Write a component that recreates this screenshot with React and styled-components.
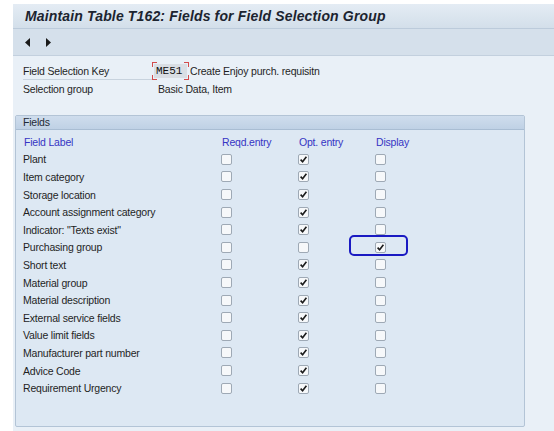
import styled, { createGlobalStyle } from 'styled-components';

const GlobalStyle = createGlobalStyle`
  html, body {
    margin: 0;
    padding: 0;
    background: #ffffff;
  }
  body {
    font-family: "Liberation Sans", Arial, sans-serif;
    font-size: 10.5px;
    letter-spacing: -0.2px;
    color: #1f1f1f;
  }
`;

const fields = [
  { label: 'Plant', opt: true },
  { label: 'Item category', opt: true },
  { label: 'Storage location', opt: true },
  { label: 'Account assignment category', opt: true },
  { label: 'Indicator: "Texts exist"', opt: true },
  { label: 'Purchasing group', display: true, focus: true },
  { label: 'Short text', opt: true },
  { label: 'Material group', opt: true },
  { label: 'Material description', opt: true },
  { label: 'External service fields', opt: true },
  { label: 'Value limit fields', opt: true },
  { label: 'Manufacturer part number', opt: true },
  { label: 'Advice Code', opt: true },
  { label: 'Requirement Urgency', opt: true },
];

const Check = ({ checked }) => (
  <Box>
    {checked && (
      <svg width="9" height="9" viewBox="0 0 9 9">
        <path d="M1.6 4.6 L3.6 6.8 L7.4 1.8" fill="none" stroke="#1b1b1b" strokeWidth="1.6" />
      </svg>
    )}
  </Box>
);

const App = () => {
  return (
    <>
      <GlobalStyle />
      <Screen>
        <TitleBar>
          <Title>Maintain Table T162: Fields for Field Selection Group</Title>
        </TitleBar>
        <Toolbar>
          <Arrow>
            <svg width="6" height="9" viewBox="0 0 6 9">
              <path d="M5 0 L0 4.5 L5 9 Z" fill="#1a1a1a" />
            </svg>
          </Arrow>
          <Arrow>
            <svg width="6" height="9" viewBox="0 0 6 9">
              <path d="M1 0 L6 4.5 L1 9 Z" fill="#1a1a1a" />
            </svg>
          </Arrow>
        </Toolbar>
        <KeyArea>
          <KeyRow>
            <KeyLabel underline>Field Selection Key</KeyLabel>
            <InputField>
              ME51
              <Corner pos="tl" />
              <Corner pos="tr" />
              <Corner pos="bl" />
              <Corner pos="br" />
            </InputField>
            <KeyText>Create Enjoy purch. requisitn</KeyText>
          </KeyRow>
          <KeyRow>
            <KeyLabel>Selection group</KeyLabel>
            <KeyText indent>Basic Data, Item</KeyText>
          </KeyRow>
        </KeyArea>
        <Group>
          <GroupHeader>Fields</GroupHeader>
          <Table>
            <HeadCell>Field Label</HeadCell>
            <HeadCell>Reqd.entry</HeadCell>
            <HeadCell>Opt. entry</HeadCell>
            <HeadCell>Display</HeadCell>
            {fields.map(f => (
              <Row key={f.label}>
                <Cell>{f.label}</Cell>
                <Cell><Check checked={!!f.reqd} /></Cell>
                <Cell><Check checked={!!f.opt} /></Cell>
                <Cell>
                  <Check checked={!!f.display} />
                  {f.focus && <Marker />}
                </Cell>
              </Row>
            ))}
          </Table>
        </Group>
      </Screen>
    </>
  );
};

export default App;

const Screen = styled.div`
  margin: 4px 0 0 13px;
  height: 427px;
  background: #e9f0f7;
  display: flex;
  flex-direction: column;
`;

const TitleBar = styled.div`
  height: 24px;
  display: flex;
  align-items: center;
  padding-left: 12px;
  background: linear-gradient(#e4ecf4, #d3dfea);
  border-bottom: 1px solid #bccbdb;
`;

const Title = styled.h1`
  margin: 0;
  font-family: "Liberation Sans", Arial, sans-serif;
  font-weight: bold;
  font-style: italic;
  font-size: 14px;
  letter-spacing: 0.15px;
  color: #1c2430;
`;

const Toolbar = styled.div`
  height: 26px;
  display: flex;
  align-items: center;
  gap: 14px;
  padding-left: 12px;
  background: #d5e0eb;
  border-bottom: 1px solid #c3d0de;
`;

const Arrow = styled.span`
  display: flex;
  width: 6px;
`;

const KeyArea = styled.div`
  padding: 6px 0 0 10px;
  height: 53px;
`;

const KeyRow = styled.div`
  display: flex;
  align-items: center;
  height: 18px;
`;

const KeyLabel = styled.div`
  width: 131px;
  height: 16px;
  line-height: 16px;
  border-bottom: ${p => (p.underline ? '1px solid #c8d3de' : '1px solid transparent')};
`;

const InputField = styled.div`
  position: relative;
  width: 31px;
  height: 14px;
  line-height: 14px;
  padding-left: 2px;
  background: #d9dee4;
  font-family: "Liberation Mono", "Courier New", monospace;
  font-size: 11px;
  letter-spacing: 0;
  color: #111;
`;

const Corner = styled.span`
  position: absolute;
  width: 4px;
  height: 4px;
  border-color: #d24c4c;
  border-style: solid;
  border-width: 0;
  ${p => p.pos === 'tl' && 'top:-2px;left:-2px;border-top-width:1px;border-left-width:1px;'}
  ${p => p.pos === 'tr' && 'top:-2px;right:-2px;border-top-width:1px;border-right-width:1px;'}
  ${p => p.pos === 'bl' && 'bottom:-2px;left:-2px;border-bottom-width:1px;border-left-width:1px;'}
  ${p => p.pos === 'br' && 'bottom:-2px;right:-2px;border-bottom-width:1px;border-right-width:1px;'}
`;

const KeyText = styled.div`
  margin-left: ${p => (p.indent ? '4px' : '3px')};
`;

const Group = styled.div`
  margin-left: 2px;
  width: 510px;
  height: 312px;
  box-sizing: border-box;
  border: 1px solid #b3c4d6;
  border-radius: 2px;
  background: #dde8f3;
  display: flex;
  flex-direction: column;
`;

const GroupHeader = styled.div`
  height: 13px;
  line-height: 13px;
  padding-left: 7px;
  background: linear-gradient(#cfdded, #bfd1e5);
  border-bottom: 1px solid #a9bdd3;
  color: #1f2a36;
`;

const Table = styled.div`
  display: grid;
  grid-template-columns: 198px 77px 77px 1fr;
  grid-auto-rows: 17.6px;
  padding: 3px 0 0 7px;
  align-items: center;
`;

const HeadCell = styled.div`
  color: #3535c4;
  padding-left: 1px;
`;

const Row = styled.div`
  display: contents;
`;

const Cell = styled.div`
  position: relative;
  display: flex;
  align-items: center;
`;

const Box = styled.span`
  width: 9px;
  height: 9px;
  border: 1px solid #9ea9b5;
  border-radius: 2px;
  background: #f6f8fa;
  display: flex;
  align-items: center;
  justify-content: center;
`;

const Marker = styled.span`
  position: absolute;
  left: -26px;
  top: -7px;
  width: 55px;
  height: 17px;
  border: 2px solid #1a1ac2;
  border-radius: 5px;
`;
